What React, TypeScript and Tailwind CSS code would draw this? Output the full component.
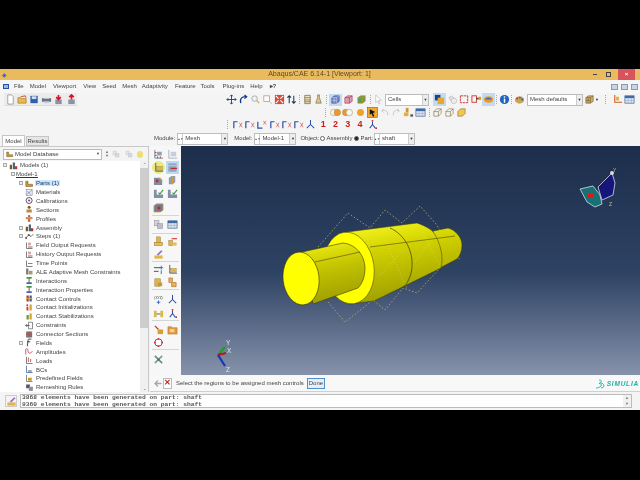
import type { ReactNode } from "react";

const ui = "font-['Liberation_Sans',Arial,sans-serif]";

const px = (c: ReactNode, size = 12) => (
  <svg width={size} height={size} viewBox="0 0 12 12" className="shrink-0">
    {c}
  </svg>
);

const icons: Record<string, ReactNode> = {
  doc: <path d="M3 1h4l2 2v8H3z" fill="#fff" stroke="#8a8a8a" strokeWidth=".8" />,
  open: (
    <>
      <path d="M1 4h3l1 1h5v5H1z" fill="#e9b949" stroke="#8f6a14" strokeWidth=".6" />
      <path d="M4 3l5-1 1 2" fill="none" stroke="#d04020" />
    </>
  ),
  save: (
    <>
      <rect x="1.500" y="2" width="8" height="8" fill="#2f5fa8" />
      <rect x="3" y="2.500" width="5" height="3" fill="#cfe0f5" />
    </>
  ),
  print: (
    <>
      <rect x="1" y="4.500" width="10" height="4" fill="#6a7488" />
      <rect x="3" y="2" width="6" height="3" fill="#e8e8e8" />
      <rect x="3" y="8" width="6" height="2" fill="#c9cdd6" />
    </>
  ),
  imp: (
    <>
      <rect x="2.500" y="6" width="7" height="5" fill="#8a93a5" />
      <path d="M6 1v4M3.500 3.500L6 6l2.500-2.500" stroke="#d8122a" strokeWidth="1.800" fill="none" />
    </>
  ),
  exp: (
    <>
      <rect x="2.500" y="6" width="7" height="5" fill="#8a93a5" />
      <path d="M6 6V1.500M3.500 3.500L6 1l2.500 2.500" stroke="#d8122a" strokeWidth="1.800" fill="none" />
    </>
  ),
  pan: <path d="M6 1v10M1 6h10M4.500 2.500L6 1l1.500 1.500M4.500 9.500L6 11l1.500-1.500M2.500 4.500L1 6l1.500 1.500M9.500 4.500L11 6 9.500 7.500" stroke="#1c3f8c" strokeWidth="1" fill="none" />,
  rot: <path d="M3 10C1.500 5 5 2 9 3M7 1l2.500 2L7 5" stroke="#123a80" strokeWidth="1.300" fill="none" />,
  zoom: (
    <>
      <circle cx="5" cy="5" r="3" fill="#eef2f6" stroke="#a8a8a8" />
      <path d="M7 7l3 3" stroke="#c9a860" strokeWidth="1.400" />
    </>
  ),
  box: (
    <>
      <rect x="2" y="2" width="6" height="6" fill="#fff" stroke="#c98080" strokeWidth=".8" />
      <path d="M8 8l2.500 2.500" stroke="#a8a8a8" />
    </>
  ),
  fit: (
    <>
      <rect x="1" y="1" width="10" height="10" fill="#d84a3a" />
      <path d="M2 2l3 3M10 2L7 5M2 10l3-3M10 10L7 7" stroke="#fff" strokeWidth="1.200" />
    </>
  ),
  swap: <path d="M3.500 10V2M1.500 4l2-2 2 2M8.500 2v8M6.500 8l2 2 2-2" stroke="#1f2f55" strokeWidth="1.100" fill="none" />,
  list: <path d="M3 1.500h6v9H3zM3 4h6M3 6.500h6M3 8.500h6" stroke="#7a6a3a" fill="#efe6c8" strokeWidth=".8" />,
  flask: <path d="M5 1h2v3l2 6H3l2-6z" fill="#d9c78e" stroke="#7a6a3a" strokeWidth=".7" />,
  grid: (
    <>
      <path d="M2 4l3-2h5v6l-3 2H2z" fill="#6f86c4" stroke="#2e418a" strokeWidth=".6" />
      <path d="M2 7h5M4.500 4v6M7 4v6M2 4h5l3-2" stroke="#dfe6f7" strokeWidth=".5" fill="none" />
    </>
  ),
  redcube: <path d="M2 4l3-2h5v6l-3 2H2zM2 4h5v6M7 4l3-2" fill="#d8a0b4" stroke="#a83a5a" strokeWidth=".7" />,
  greencube: <path d="M2 4l3-2h5v6l-3 2H2zM2 4h5v6M7 4l3-2" fill="#5aa050" stroke="#c88f30" strokeWidth=".8" />,
  cursor: <path d="M3 1l6 6H6l1.500 3.500-1 .5L5 7.500 3 9.500z" fill="#fff" stroke="#b5b5b5" strokeWidth=".7" />,
  yellowBlue: (
    <>
      <rect x="1" y="1" width="6" height="6" fill="#1c3f8c" />
      <rect x="4" y="4" width="7" height="7" fill="#e8a92a" />
    </>
  ),
  ghost: (
    <>
      <path d="M2 4l3-2 3 3-3 3z" fill="#e4e4e4" stroke="#a5a5a5" strokeWidth=".6" />
      <circle cx="7.500" cy="7.500" r="3" fill="#eee" stroke="#aaa" strokeWidth=".6" />
    </>
  ),
  redBox: <rect x="1.500" y="2" width="8" height="7.500" fill="none" stroke="#cc2222" strokeWidth=".9" strokeDasharray="3 .6" />,
  redBox2: (
    <>
      <rect x="1" y="2" width="5" height="7" fill="none" stroke="#cc2222" strokeWidth=".9" />
      <path d="M6 5h5" stroke="#22306a" strokeWidth="1.600" />
      <rect x="8" y="3" width="3" height="3" fill="#d8a020" />
    </>
  ),
  eye: (
    <>
      <ellipse cx="6" cy="6" rx="5" ry="3.500" fill="#e89a30" />
      <path d="M2 6c2-3 6-3 8 0" fill="#3a6ea8" />
    </>
  ),
  info: (
    <>
      <circle cx="6" cy="6" r="5" fill="#1f62c0" />
      <rect x="5.200" y="5" width="1.600" height="4.500" fill="#fff" />
      <rect x="5.200" y="2.500" width="1.600" height="1.500" fill="#fff" />
    </>
  ),
  palette: (
    <>
      <ellipse cx="6" cy="6.500" rx="5" ry="4" fill="#c9a45a" />
      <circle cx="3.500" cy="5" r="1.100" fill="#d03030" />
      <circle cx="6.500" cy="4" r="1.100" fill="#2f8f40" />
      <circle cx="9" cy="6" r="1.100" fill="#2850c0" />
    </>
  ),
  tanCube: <path d="M2 4l3-2h5v6l-3 2H2zM2 4h5v6M7 4l3-2M4.500 4v6M2 7h5" fill="#cdb070" stroke="#7a6230" strokeWidth=".7" />,
  axesTool: (
    <>
      <path d="M3 1v8h8" stroke="#d65a20" fill="none" strokeWidth="1.200" />
      <rect x="4.500" y="3" width="3" height="4" fill="#d9b04a" />
    </>
  ),
  table: (
    <>
      <rect x="1" y="2" width="10" height="8" fill="#dfe6f0" stroke="#4a6a9a" strokeWidth=".8" />
      <rect x="1" y="2" width="10" height="2.500" fill="#3e6aa8" />
      <path d="M1 7h10M4.500 4.500V10M8 4.500V10" stroke="#8a9ab8" strokeWidth=".5" />
    </>
  ),
  venn1: (
    <>
      <circle cx="4" cy="6" r="3.500" fill="#f6f6f6" stroke="#b88a40" strokeWidth=".6" />
      <circle cx="8" cy="6" r="3.500" fill="#e89a30" stroke="#b88a40" strokeWidth=".6" />
    </>
  ),
  venn2: (
    <>
      <circle cx="4" cy="6" r="3.500" fill="#e89a30" stroke="#b88a40" strokeWidth=".6" />
      <circle cx="8" cy="6" r="3.500" fill="#f6f6f6" stroke="#b88a40" strokeWidth=".6" />
    </>
  ),
  ball: <circle cx="6" cy="6" r="3.800" fill="#eda32c" />,
  orient: (
    <>
      <rect x=".5" y=".5" width="11" height="11" fill="#f0a830" stroke="#444" strokeWidth=".5" />
      <path d="M3 2.500l6 3-2.500 1L8 10 6.500 10.500 5 7 3 8.500z" fill="#111" />
    </>
  ),
  undo: <path d="M9.500 9C10 5 7 2.500 3.500 4M5.500 2L3 4l2 2" stroke="#c4c4c4" fill="none" />,
  redo: <path d="M2.500 9C2 5 5 2.500 8.500 4M6.500 2L9 4 7 6" stroke="#c4c4c4" fill="none" />,
  tools: (
    <>
      <rect x="3" y="1" width="3" height="5" fill="#c89a3a" />
      <rect x="1" y="6" width="5" height="4" fill="#e0b040" />
      <rect x="8" y="8" width="3" height="2.500" fill="#555" />
    </>
  ),
  wire: <path d="M2 5l3-3h5v5l-3 3H2zM2 5h5v5M7 5l3-3" fill="none" stroke="#8a7440" strokeWidth=".7" />,
  solid: <path d="M2 5l3-3h5v5l-3 3H2z" fill="#f0c850" stroke="#8a7440" strokeWidth=".7" />,
  xy: (
    <>
      <path d="M2 10V3h4" fill="none" stroke="#2b4fa8" strokeWidth="1.300" />
      <path d="M8 4l3 5M11 4L8 9" stroke="#c03030" strokeWidth=".6" />
    </>
  ),
  xz: (
    <>
      <path d="M2 3v7h5" fill="none" stroke="#2b4fa8" strokeWidth="1.300" />
      <path d="M8 2l3 4M11 2L8 6" stroke="#c03030" strokeWidth=".6" />
    </>
  ),
  tri: <path d="M6 1v5M6 6l-4 4M6 6l4 4" stroke="#2b4fa8" strokeWidth="1.100" fill="none" />,
  triRed: (
    <>
      <path d="M6 3v3M6 6l-3 4M6 6l3 4" stroke="#2b4fa8" strokeWidth="1.100" fill="none" />
      <circle cx="6" cy="2" r="1" fill="#cc2222" />
      <circle cx="10" cy="10" r="1" fill="#cc2222" />
    </>
  ),
  seed: (
    <>
      <path d="M2 1v9h9" stroke="#7a7f8a" fill="none" />
      <path d="M2 4h2M2 7h2M5 10V8M8 10V8" stroke="#c03030" />
      <rect x="4.500" y="3" width="5" height="4" fill="#8fa0bc" />
    </>
  ),
  seedFade: (
    <>
      <path d="M2 1v9h9" stroke="#a8adb8" fill="none" />
      <rect x="4" y="3" width="6" height="5" fill="#c5cedc" />
    </>
  ),
  meshCtl: (
    <>
      <rect x="1.500" y="1.500" width="9" height="9" fill="#8fa4c0" />
      <path d="M4 7h7" stroke="#cc2222" strokeWidth="1.200" />
      <path d="M1.500 4h9" stroke="#e7eef8" strokeWidth=".6" />
    </>
  ),
  block: (
    <>
      <path d="M1 3h6l3 3v5H1z" fill="#7f8ea8" />
      <rect x="3" y="5" width="3" height="3" fill="#c03030" />
      <path d="M7 3l3 3" stroke="#d9a030" strokeWidth="1.200" />
    </>
  ),
  block2: (
    <>
      <path d="M2 10V3l3-2h4v7l-3 2z" fill="#8e9bb0" />
      <path d="M6 2v8" stroke="#d9a030" strokeWidth="1.300" />
    </>
  ),
  check: (
    <>
      <path d="M1 2h3v5h7v4H1z" fill="#8090a8" />
      <path d="M6 5l1.500 1.500L11 2" stroke="#2a9a2a" fill="none" strokeWidth="1.100" />
    </>
  ),
  cube: (
    <>
      <path d="M1 4l3-2h7v7l-3 2H1z" fill="#6e7f9c" stroke="#d9a030" strokeWidth=".7" />
      <rect x="5" y="5" width="3" height="3" fill="#cc2222" />
    </>
  ),
  docs: (
    <>
      <rect x="1.500" y="1.500" width="5" height="6" fill="#d0d4da" stroke="#888" strokeWidth=".5" />
      <rect x="5" y="5" width="5.500" height="5.500" fill="#b8bfca" stroke="#888" strokeWidth=".5" />
    </>
  ),
  gold: (
    <>
      <rect x="4" y="1" width="4" height="6" fill="#e0b848" stroke="#8a6c20" strokeWidth=".5" />
      <rect x="1.500" y="7" width="9" height="3.500" fill="#e8c050" stroke="#8a6c20" strokeWidth=".5" />
    </>
  ),
  goldRed: (
    <>
      <rect x="2" y="5" width="4" height="5.500" fill="#e0b848" stroke="#8a6c20" strokeWidth=".5" />
      <rect x="6" y="7" width="4.500" height="3.500" fill="#e8c050" />
      <path d="M5 3h6" stroke="#cc2222" strokeWidth="1.100" />
    </>
  ),
  pen: (
    <>
      <rect x="1.500" y="7" width="9" height="3.500" fill="#e0b848" />
      <path d="M4 6l5-5 1.500 1.500-5 5z" fill="#a06ac0" stroke="#fff" strokeWidth=".4" />
    </>
  ),
  arrows: (
    <>
      <path d="M1 4h7M1 8h5" stroke="#444" />
      <path d="M9 2v4M7 4h4M9 7v4" stroke="#2a6ac0" />
    </>
  ),
  goldBlue: (
    <>
      <path d="M3 1v9h8" stroke="#3a5aa0" fill="none" />
      <rect x="4" y="5" width="6" height="4" fill="#dcb84a" stroke="#8a6c20" strokeWidth=".4" />
    </>
  ),
  goldBox: (
    <>
      <rect x="2" y="2" width="6" height="8" fill="#dcb84a" stroke="#8a6c20" strokeWidth=".5" />
      <rect x="5" y="6" width="5" height="4" fill="#c89a3a" />
    </>
  ),
  goldStep: <path d="M2 1h4v5h4v4.500H5V6H2z" fill="#dcb84a" stroke="#b06030" strokeWidth=".6" />,
  dots: (
    <>
      <text x="6" y="5" textAnchor="middle" fontSize="3.500" fill="#333" fontFamily="Liberation Sans, sans-serif">
        (XYZ)
      </text>
      <path d="M6 7v4M4 9h4" stroke="#2a6ac0" />
    </>
  ),
  tieBar: (
    <>
      <rect x="1" y="3" width="3" height="7" fill="#dcb84a" />
      <rect x="8" y="3" width="3" height="7" fill="#dcb84a" />
      <path d="M4 6.500h4" stroke="#3a5aa0" />
    </>
  ),
  slant: (
    <>
      <path d="M2 2l4 4" stroke="#cc3030" strokeWidth="1.300" />
      <rect x="5" y="6" width="6" height="5" fill="#d9a030" />
    </>
  ),
  folder: (
    <>
      <path d="M1 3h4l1 1h5v7H1z" fill="#e39a3c" stroke="#a56018" strokeWidth=".5" />
      <rect x="3" y="5.500" width="5" height="3.500" fill="#f5d090" />
    </>
  ),
  ring: (
    <>
      <circle cx="6" cy="6" r="4" fill="#fff" stroke="#3a5aa0" />
      <circle cx="6" cy="2" r="1" fill="#cc3030" />
      <circle cx="6" cy="10" r="1" fill="#cc3030" />
      <circle cx="2" cy="6" r="1" fill="#cc3030" />
      <circle cx="10" cy="6" r="1" fill="#cc3030" />
    </>
  ),
  wrench: (
    <>
      <path d="M2 10L10 2" stroke="#8a9a90" strokeWidth="1.800" />
      <path d="M2 2l8 8" stroke="#5a9a7a" strokeWidth="1.800" />
      <circle cx="6" cy="6" r="1.500" fill="#5a7a70" />
    </>
  ),
  model: (
    <>
      <rect x="1" y="5" width="3" height="6" fill="#7a5a20" />
      <rect x="5" y="2" width="3" height="9" fill="#55606e" />
      <path d="M8 7h3v4H8z" fill="#c03030" />
    </>
  ),
  parts: <path d="M1 10V3h3v4h6v3z" fill="#c49a30" stroke="#6a4a10" strokeWidth=".6" />,
  material: (
    <>
      <rect x="1.500" y="2" width="8" height="8" fill="#eef0f5" stroke="#667" strokeWidth=".6" />
      <path d="M2 9l7-6M3 4l5 5" stroke="#3a5aa0" strokeWidth=".7" />
    </>
  ),
  calib: (
    <>
      <circle cx="5.500" cy="6" r="4" fill="#fff" stroke="#223a7a" strokeWidth="1.100" />
      <circle cx="5.500" cy="6" r="1.400" fill="#c03030" />
    </>
  ),
  section: (
    <>
      <circle cx="5.500" cy="3" r="2" fill="#8a5a20" />
      <rect x="2" y="6" width="7" height="4" fill="#b88a40" />
    </>
  ),
  profile: (
    <>
      <rect x="4" y="1.500" width="3" height="9" fill="#c46a3a" />
      <rect x="1" y="4" width="9" height="3" fill="#d88a5a" />
    </>
  ),
  assembly: (
    <>
      <rect x="1" y="5" width="3" height="6" fill="#7a5a20" />
      <rect x="5" y="2" width="3" height="9" fill="#55606e" />
      <rect x="8" y="7" width="3" height="4" fill="#b03030" />
    </>
  ),
  steps: (
    <>
      <path d="M1 8l4-4 3 2 3-3" stroke="#333" fill="none" />
      <circle cx="5" cy="4" r="1.300" fill="#555" />
      <circle cx="1.500" cy="8" r="1.300" fill="#555" />
    </>
  ),
  output: (
    <>
      <path d="M2 2v8h8" stroke="#555" fill="none" />
      <path d="M4 3h4M4 5h4" stroke="#c03030" strokeWidth=".8" />
      <path d="M4 8h6" stroke="#444" />
    </>
  ),
  time: (
    <>
      <path d="M2 2v8h8" stroke="#555" fill="none" />
      <path d="M4 6h6" stroke="#3a5aa0" />
    </>
  ),
  ale: (
    <>
      <rect x="1.500" y="2" width="3" height="8" fill="#777" />
      <rect x="5" y="5" width="5" height="5" fill="#a8a060" />
    </>
  ),
  interact: (
    <>
      <rect x="2" y="1.500" width="7" height="2" fill="#2a8a3a" />
      <rect x="2" y="8.500" width="7" height="2" fill="#2a4a9a" />
      <path d="M5.500 3v6" stroke="#7a5a20" strokeWidth="1.300" />
    </>
  ),
  contact: (
    <>
      <rect x="2" y="2" width="3" height="8" fill="#b03a3a" />
      <rect x="6" y="2" width="3" height="8" fill="#3a5ab0" />
      <path d="M1 6h9" stroke="#d8b040" />
    </>
  ),
  contactI: (
    <>
      <rect x="2" y="5" width="2.500" height="5" fill="#d03a3a" />
      <rect x="6" y="2" width="3" height="8" fill="#d8a030" />
      <circle cx="3" cy="3" r="1.200" fill="#c03030" />
    </>
  ),
  contactS: (
    <>
      <rect x="2" y="4" width="3" height="6" fill="#6a9a40" />
      <rect x="6" y="2" width="3" height="8" fill="#d8a030" />
    </>
  ),
  constraint: (
    <>
      <rect x="5" y="1.500" width="5" height="9" fill="#fff" stroke="#444" strokeWidth=".8" />
      <path d="M1 6h5M3 4l-2 2 2 2" stroke="#444" fill="none" />
    </>
  ),
  connector: (
    <>
      <rect x="1.500" y="2" width="8" height="8" fill="#777" />
      <path d="M5.500 2v8M1.500 6h8" stroke="#b05050" />
    </>
  ),
  field: <path d="M8.500 1.500H5C4 1.500 4 3 4 4l-1 7M3 5h4" stroke="#222" fill="none" strokeWidth="1.100" />,
  amp: <path d="M1 10V3c2-2 3 0 3 2s1 4 3 3 2-2 3-2" stroke="#b03030" fill="none" />,
  load: (
    <>
      <path d="M2 1v9h8" stroke="#555" fill="none" />
      <path d="M4.500 2v6M7.500 4v4" stroke="#b03030" />
    </>
  ),
  bc: (
    <>
      <path d="M2 1v9h8" stroke="#3a5aa0" fill="none" />
      <path d="M4 8h5" stroke="#666" strokeWidth="1.500" />
    </>
  ),
  predef: (
    <>
      <path d="M2 1v9h8" stroke="#666" fill="none" />
      <rect x="4" y="5" width="5" height="4" fill="#c49a30" />
    </>
  ),
  remesh: (
    <>
      <rect x="1.500" y="2" width="5" height="5" fill="#556" />
      <rect x="5" y="5" width="5.500" height="5.500" fill="#8a8f9a" />
    </>
  ),
};

function Icon({ name, size = 12, className = "" }: { name: string; size?: number; className?: string }) {
  return <span className={`flex shrink-0 items-center justify-center ${className}`}>{px(icons[name], size)}</span>;
}

function Sep({ m = "mx-[3px]" }: { m?: string }) {
  return <span className={`h-[9px] w-px shrink-0 border-l border-dotted border-[#a8a8a8] ${m}`} />;
}

function Combo({ width, text, spin }: { width: string; text: string; spin?: boolean }) {
  return (
    <div className={`flex h-[12px] shrink-0 items-center border border-[#bdbdbd] bg-white text-[6px] text-[#444] ${width}`}>
      {spin && <span className="flex h-full w-[5px] flex-col items-center justify-center border-r border-[#ccc] text-[3px] leading-[4px] text-[#555]">▲▼</span>}
      <span className="ml-[2px] flex-1 truncate">{text}</span>
      <span className="flex h-full w-[6px] items-center justify-center border-l border-[#ccc] bg-[#ededed] text-[4px] text-[#333]">▼</span>
    </div>
  );
}

const menu: [string, string][] = [
  ["File", "ml-[5px]"],
  ["Model", "ml-[6px]"],
  ["Viewport", "ml-[7px]"],
  ["View", "ml-[7px]"],
  ["Seed", "ml-[6px]"],
  ["Mesh", "ml-[6px]"],
  ["Adaptivity", "ml-[5px]"],
  ["Feature", "ml-[7px]"],
  ["Tools", "ml-[5px]"],
  ["Plug-ins", "ml-[8px]"],
  ["Help", "ml-[6px]"],
  ["▸?", "ml-[7px] font-bold"],
];

type Row = { label: string; icon: string; depth: 0 | 1 | 2; plus?: boolean; mark?: boolean };

const tree: Row[] = [
  { label: "Models (1)", icon: "model", depth: 0, plus: true },
  { label: "Model-1", icon: "", depth: 1, plus: true },
  { label: "Parts (1)", icon: "parts", depth: 2, plus: true, mark: true },
  { label: "Materials", icon: "material", depth: 2 },
  { label: "Calibrations", icon: "calib", depth: 2 },
  { label: "Sections", icon: "section", depth: 2 },
  { label: "Profiles", icon: "profile", depth: 2 },
  { label: "Assembly", icon: "assembly", depth: 2, plus: true },
  { label: "Steps (1)", icon: "steps", depth: 2, plus: true },
  { label: "Field Output Requests", icon: "output", depth: 2 },
  { label: "History Output Requests", icon: "output", depth: 2 },
  { label: "Time Points", icon: "time", depth: 2 },
  { label: "ALE Adaptive Mesh Constraints", icon: "ale", depth: 2 },
  { label: "Interactions", icon: "interact", depth: 2 },
  { label: "Interaction Properties", icon: "interact", depth: 2 },
  { label: "Contact Controls", icon: "contact", depth: 2 },
  { label: "Contact Initializations", icon: "contactI", depth: 2 },
  { label: "Contact Stabilizations", icon: "contactS", depth: 2 },
  { label: "Constraints", icon: "constraint", depth: 2 },
  { label: "Connector Sections", icon: "connector", depth: 2 },
  { label: "Fields", icon: "field", depth: 2, plus: true },
  { label: "Amplitudes", icon: "amp", depth: 2 },
  { label: "Loads", icon: "load", depth: 2 },
  { label: "BCs", icon: "bc", depth: 2 },
  { label: "Predefined Fields", icon: "predef", depth: 2 },
  { label: "Remeshing Rules", icon: "remesh", depth: 2 },
];

function TreeRow({ row }: { row: Row }) {
  const box = row.depth === 0 ? "ml-[3px]" : row.depth === 1 ? "ml-[11px]" : "ml-[19px]";
  return (
    <div className="flex h-[8.88px] items-center text-[6px] leading-none text-[#444]">
      {row.plus ? (
        <span className={`h-[4px] w-[4px] shrink-0 border border-[#aaa] bg-[#eee] ${box}`} />
      ) : (
        <span className={`h-[4px] w-[4px] shrink-0 ${box}`} />
      )}
      {row.icon && <Icon name={row.icon} size={9} className="ml-[2px] w-[9px]" />}
      <span
        className={
          row.mark
            ? "ml-[1px] bg-[#cde6fb] px-[1px] text-[#1a3a6a]"
            : row.depth === 1
              ? "ml-[1px] border-b border-[#333]"
              : "ml-[2px]"
        }
      >
        {row.label}
      </span>
    </div>
  );
}

function Tools({ a, b, hiA, hiB, className = "" }: { a: string; b?: string; hiA?: boolean; hiB?: boolean; className?: string }) {
  return (
    <div className={`flex items-center gap-[1px] pl-[2px] ${className}`}>
      <span className={`flex h-[13px] w-[13px] items-center justify-center ${hiA ? "rounded-full bg-[#e5ec80]" : ""}`}>
        <Icon name={a} size={11} />
      </span>
      {b && (
        <span className={`flex h-[13px] w-[13px] items-center justify-center ${hiB ? "bg-[#bcd9f2]" : ""}`}>
          <Icon name={b} size={11} />
        </span>
      )}
    </div>
  );
}

function Rule() {
  return <div className="mx-[2px] h-px bg-[#d5d5d5]" />;
}

function Shaft() {
  return (
    <svg viewBox="181 146 459 229" className="absolute inset-0 h-full w-full">
      <defs>
        <linearGradient id="big" gradientUnits="userSpaceOnUse" x1="395" y1="224" x2="410" y2="296">
          <stop offset="0" stopColor="#eeee18" />
          <stop offset="0.3" stopColor="#d2d200" />
          <stop offset="1" stopColor="#9f9f00" />
        </linearGradient>
        <linearGradient id="small" gradientUnits="userSpaceOnUse" x1="325" y1="246" x2="335" y2="298">
          <stop offset="0" stopColor="#e6e610" />
          <stop offset="0.4" stopColor="#c4c400" />
          <stop offset="1" stopColor="#a2a200" />
        </linearGradient>
      </defs>
      <g fill="none" stroke="#b8b85a" strokeWidth=".8" strokeDasharray="1.500 2">
        <path d="M318 247L348 213L370 228L385 210L402 223L420 206L436 224L460 260" />
        <path d="M328 302L345 322L373 300L385 310L403 288L417 293L440 268" />
      </g>
      <path d="M433 231L448 228C456 230 462 238 462 245C462 251 460 256 457 259L440 268Z" fill="url(#big)" stroke="#3a3a10" strokeWidth=".6" />
      <path d="M347 232L417 223C426 226 432 230 434 233C440 243 444 256 441 268L374 301L349 304Z" fill="url(#big)" stroke="#3a3a10" strokeWidth=".5" />
      <g fill="none" stroke="#e4e470" strokeWidth=".6" strokeDasharray="1 2">
        <path d="M385 240L407 288M422 232L440 265M380 275L403 250M415 262L432 240" />
      </g>
      <path d="M390 228C404 234 413 250 412 266C412 274 408 283 403 288" fill="none" stroke="#3a3a10" strokeWidth=".7" />
      <path d="M370 247L455 236" stroke="#4a4a10" strokeWidth=".6" />
      <ellipse cx="349" cy="268" rx="25" ry="36" transform="rotate(-8 349 268)" fill="#ffff00" stroke="#3a3a10" strokeWidth=".5" />
      <path d="M302 252L343 243C356 244 365 256 365 268C365 277 362 284 358 288L313 304Z" fill="url(#small)" stroke="#3a3a10" strokeWidth=".6" />
      <path d="M315 262L360 252" stroke="#4a4a10" strokeWidth=".6" />
      <ellipse cx="301" cy="278.500" rx="18" ry="26.500" transform="rotate(-6 301 278)" fill="#ffff00" stroke="#33330c" strokeWidth=".6" />

      <path d="M580 189L593 186L600 195L602 204L595 207L587 202Z" fill="#1a6f75" stroke="#cfe0e8" strokeWidth=".8" />
      <rect x="588" y="193" width="5" height="5" fill="#e01818" />
      <path d="M612 173L615 183L613 195L602 200L598 187Z" fill="#15157a" stroke="#d9d9ee" strokeWidth=".8" />
      <circle cx="612" cy="173" r="2" fill="#dcd4e8" />
      <text x="613" y="172" fontSize="5" fill="#c8c860" fontFamily="Liberation Sans, sans-serif">Y</text>
      <text x="609" y="206" fontSize="5" fill="#c8c860" fontFamily="Liberation Sans, sans-serif">Z</text>

      <path d="M218 355L225 347" stroke="#18a02a" strokeWidth="2.200" />
      <path d="M218 355L226 353" stroke="#b81818" strokeWidth="2.200" />
      <path d="M218 355L225 366" stroke="#1e2fb8" strokeWidth="2.200" />
      <text x="226" y="345" fontSize="6.500" fill="#dfe4ea" fontFamily="Liberation Sans, sans-serif">Y</text>
      <text x="227" y="353" fontSize="6.500" fill="#dfe4ea" fontFamily="Liberation Sans, sans-serif">X</text>
      <text x="226" y="372" fontSize="6.500" fill="#dfe4ea" fontFamily="Liberation Sans, sans-serif">Z</text>
    </svg>
  );
}

export default function App() {
  return (
    <div className={`flex min-h-[480px] w-[640px] flex-col overflow-hidden bg-black ${ui}`}>
      <div className="h-[69px] shrink-0" />
      <div className="flex h-[341px] flex-col bg-[#f4f4f4] blur-[0.3px]">
        {/* title */}
        <div className="relative flex h-[11px] shrink-0 items-center justify-center bg-[#e9bb5e] text-[7px] text-[#5c4a28]">
          <span className="absolute left-[2px] text-[6px] leading-none text-[#4d6bb0]">◆</span>
          <span className="ml-[-1px]">Abaqus/CAE 6.14-1 [Viewport: 1]</span>
          <div className="absolute right-[5px] flex h-full items-center">
            <span className="mr-[9px] h-px w-[4px] bg-[#444]" />
            <span className="mr-[7px] h-[5px] w-[5px] border border-[#444]" />
            <span className="flex h-full w-[17px] items-center justify-center bg-[#d9535c] text-[6px] font-bold text-white">×</span>
          </div>
        </div>
        {/* menu */}
        <div className="flex h-[13px] shrink-0 items-center bg-[#f6f6f6] pl-[3px] text-[6px] text-[#444]">
          <span className="h-[5px] w-[6px] border border-[#2b4fa8] bg-[#9fb6de]" />
          {menu.map(([label, ml]) => (
            <span key={label} className={ml}>
              {label}
            </span>
          ))}
          <div className="ml-auto mr-[2px] flex gap-[3px]">
            <span className="h-[6px] w-[7px] border border-[#8a9ab0] bg-[#c9d5e3]" />
            <span className="h-[6px] w-[7px] border border-[#8a9ab0] bg-[#c9d5e3]" />
            <span className="h-[6px] w-[7px] border border-[#8a9ab0] bg-[#c9d5e3]" />
          </div>
        </div>
        {/* toolbars */}
        <div className="flex h-[13px] shrink-0 items-center">
          <div className="ml-[4px] flex h-full w-[73px] items-center border-b border-[#ddd] bg-[#ececec]">
            {["doc", "open", "save", "print", "imp", "exp"].map((n) => (
              <Icon key={n} name={n} size={11} className="w-[12.200px]" />
            ))}
          </div>
          <div className="ml-[148px] flex h-full items-center">
            {["pan", "rot", "zoom", "box", "fit", "swap"].map((n) => (
              <Icon key={n} name={n} size={11} className="w-[12px]" />
            ))}
            <Sep m="mx-[2px]" />
            <Icon name="list" size={11} className="w-[11px]" />
            <Icon name="flask" size={11} className="w-[11px]" />
            <Sep m="mx-[2px]" />
            <span className="flex h-[12px] w-[13px] items-center justify-center bg-[#c3daf0]">
              <Icon name="grid" size={11} />
            </span>
            <Icon name="redcube" size={11} className="w-[13px]" />
            <Icon name="greencube" size={11} className="w-[13px]" />
            <Sep m="mx-[2px]" />
            <Icon name="cursor" size={11} className="w-[11px]" />
            <Combo width="w-[44px] ml-[1px]" text="Cells" />
            <span className="ml-[4px] flex h-[13px] w-[13px] items-center justify-center bg-[#c3daf0]">
              <Icon name="yellowBlue" size={11} />
            </span>
            <Icon name="ghost" size={11} className="w-[12px]" />
            <Icon name="redBox" size={11} className="w-[12px]" />
            <Icon name="redBox2" size={11} className="w-[12px]" />
            <span className="flex h-[13px] w-[13px] items-center justify-center bg-[#c3daf0]">
              <Icon name="eye" size={11} />
            </span>
            <Sep m="mx-[1px]" />
            <Icon name="info" size={11} className="w-[12px]" />
            <Sep m="mx-[1px]" />
            <Icon name="palette" size={11} className="w-[12px]" />
            <Combo width="w-[56px] ml-[2px]" text="Mesh defaults" />
            <Icon name="tanCube" size={11} className="w-[12px]" />
            <span className="text-[4px] text-[#333]">▼</span>
            <span className="mx-[6px] h-[9px] border-l border-dotted border-[#a8a8a8]" />
            <Icon name="axesTool" size={11} className="w-[12px]" />
            <Icon name="table" size={11} className="w-[12px]" />
          </div>
        </div>
        <div className="flex h-[12px] shrink-0 items-center pl-[322px]">
          <Sep />
          {["venn1", "venn2", "ball"].map((n) => (
            <Icon key={n} name={n} size={11} className="w-[12.500px]" />
          ))}
          <Icon name="orient" size={11} className="w-[12px]" />
          {["undo", "redo", "tools", "table"].map((n) => (
            <Icon key={n} name={n} size={11} className="w-[12px]" />
          ))}
          <Sep m="mx-[2px]" />
          {["wire", "wire", "solid"].map((n, i) => (
            <Icon key={i} name={n} size={11} className="w-[12px]" />
          ))}
        </div>
        <div className="flex h-[13px] shrink-0 items-center pl-[224px]">
          <Sep />
          {["xy", "xy", "xz", "xy", "xy", "xy", "tri"].map((n, i) => (
            <Icon key={i} name={n} size={11} className="w-[12.300px]" />
          ))}
          {["1", "2", "3", "4"].map((n) => (
            <span key={n} className="flex w-[12.300px] justify-center text-[9px] font-bold leading-none text-[#d21a1a]">
              {n}
            </span>
          ))}
          <Icon name="triRed" size={11} className="w-[12px]" />
        </div>
        {/* context + main */}
        <div className="flex min-h-0 flex-1">
          <div className="flex w-[150px] shrink-0 flex-col">
            <div className="flex h-[15px] shrink-0 items-end pl-[2px] text-[6px] text-[#444]">
              <span className="flex h-[11px] w-[23px] items-center justify-center border border-b-0 border-[#c5c5c5] bg-white">Model</span>
              <span className="ml-[1px] flex h-[10px] w-[23px] items-center justify-center border border-[#c5c5c5] bg-[#e6e6e6]">Results</span>
            </div>
            <div className="mr-[1px] flex min-h-0 flex-1 flex-col border-t border-r border-[#c8c8c8] bg-[#f4f4f4]">
              <div className="flex h-[14px] shrink-0 items-center pl-[3px]">
                <div className="flex h-[11px] w-[99px] items-center border border-[#bbb] bg-white text-[6px] text-[#444]">
                  <Icon name="parts" size={8} className="ml-[1px] w-[9px]" />
                  <span className="ml-[1px] flex-1">Model Database</span>
                  <span className="w-[5px] text-[4px]">▼</span>
                </div>
                <span className="ml-[3px] text-[4px] leading-[4px] text-[#777]">
                  ▲<br />▼
                </span>
                <Icon name="docs" size={8} className="ml-[3px] w-[9px] opacity-50" />
                <Icon name="docs" size={8} className="ml-[4px] w-[9px] opacity-50" />
                <span className="ml-[3px] h-[7px] w-[6px] rounded-full bg-[#ede070]" />
              </div>
              <div className="flex min-h-0 flex-1">
                <div className="min-w-0 flex-1 overflow-hidden bg-white">
                  {tree.map((r) => (
                    <TreeRow key={r.label} row={r} />
                  ))}
                </div>
                <div className="flex w-[8px] shrink-0 flex-col bg-[#f0f0f0]">
                  <span className="h-[7px] text-center text-[4px] leading-[7px] text-[#555]">⌃</span>
                  <span className="h-[160px] bg-[#cdcdcd]" />
                  <span className="mt-auto h-[7px] text-center text-[4px] leading-[7px] text-[#555]">⌄</span>
                </div>
              </div>
            </div>
          </div>
          <div className="flex min-w-0 flex-1 flex-col">
            <div className="flex h-[15px] shrink-0 items-center pl-[4px] text-[6px] text-[#444]">
              <span>Module:</span>
              <Combo width="ml-[2px] w-[51px]" text="Mesh" spin />
              <span className="ml-[6px]">Model:</span>
              <Combo width="ml-[2px] w-[42px]" text="Model-1" spin />
              <span className="ml-[4px]">Object:</span>
              <span className="ml-[1px] h-[5px] w-[5px] rounded-full border border-[#666] bg-white" />
              <span className="ml-[1px]">Assembly</span>
              <span className="ml-[2px] h-[5px] w-[5px] rounded-full border border-[#666] bg-[#222]" />
              <span className="ml-[1px]">Part:</span>
              <Combo width="ml-[1px] w-[41px]" text="shaft" spin />
            </div>
            <div className="flex min-h-0 flex-1">
              <div className="flex w-[31px] shrink-0 flex-col bg-[#f7f7f7] pt-[2px]">
                <Tools a="seed" b="seedFade" />
                <Tools a="goldBlue" b="meshCtl" hiA hiB />
                <Tools a="block" b="block2" />
                <Tools a="check" b="check" />
                <Tools a="cube" className="mt-[1px] mb-[1px]" />
                <Rule />
                <Tools a="docs" b="table" className="my-[2px]" />
                <Rule />
                <Tools a="gold" b="goldRed" className="mt-[1px]" />
                <Tools a="pen" />
                <Rule />
                <Tools a="arrows" b="goldBlue" className="mt-[1px]" />
                <Tools a="goldBox" b="goldStep" />
                <Rule />
                <Tools a="dots" b="tri" className="mt-[3px]" />
                <Tools a="tieBar" b="triRed" className="mt-[1px]" />
                <Rule />
                <Tools a="slant" b="folder" className="mt-[2px]" />
                <Tools a="ring" />
                <Rule />
                <Tools a="wrench" className="mt-[3px]" />
              </div>
              <div className="relative min-w-0 flex-1 bg-gradient-to-b from-[#1c2e4b] via-[#2e4263] via-55% to-[#8793ab]">
                <Shaft />
              </div>
            </div>
            <div className="flex h-[17px] shrink-0 items-center border-b border-[#cfcfcf] bg-[#f8f8f8] pl-[3px] text-[6px] text-[#444]">
              <svg width="10" height="11" viewBox="0 0 10 11" className="shrink-0">
                <path d="M8.500 5.500H2M5 2.500l-3 3 3 3" stroke="#a8a8a8" strokeWidth="1.300" fill="none" />
              </svg>
              <span className="flex h-[11px] w-[9px] items-center justify-center border border-[#bbb] bg-white text-[8px] font-bold leading-none text-[#d21a1a]">✕</span>
              <span className="ml-[4px]">Select the regions to be assigned mesh controls</span>
              <span className="ml-[3px] border border-[#4d90d0] bg-[#e8eef5] px-[1px] leading-[9px]">Done</span>
              <div className="ml-auto mr-[1px] mt-[1px] flex items-center text-[#1bb0a8]">
                <svg width="10" height="10" viewBox="0 0 10 10" className="shrink-0">
                  <path d="M4 1c2 0 3 1 2 2L4 4.500c2 0 3 1 2 2.500-1 1-3 2-5 2M6 4c1 0 3 1 3 3 0 1-2 2-3 2" stroke="#1bb0a8" strokeWidth=".9" fill="none" />
                </svg>
                <span className="ml-[2px] text-[6.500px] font-bold italic tracking-[0.8px]">SIMULIA</span>
              </div>
            </div>
          </div>
        </div>
        {/* messages */}
        <div className="flex h-[18px] shrink-0 items-center bg-[#f4f4f4] pl-[5px]">
          <Icon name="pen" size={11} className="h-[12px] w-[12px] border border-[#ccc]" />
          <div className="relative ml-[3px] mr-[8px] h-[14px] flex-1 border border-[#bbb] bg-white pl-px font-['Liberation_Mono',monospace] text-[6.250px] font-bold leading-[6.500px] text-[#555]">
            <div>3868 elements have been generated on part: shaft</div>
            <div>9360 elements have been generated on part: shaft</div>
            <div className="absolute inset-y-0 right-0 flex w-[8px] flex-col items-center justify-between bg-[#f0f0f0] text-[4px] font-normal leading-[6px] text-[#777]">
              <span>▲</span>
              <span>▼</span>
            </div>
          </div>
        </div>
      </div>
    </div>
  );
}
